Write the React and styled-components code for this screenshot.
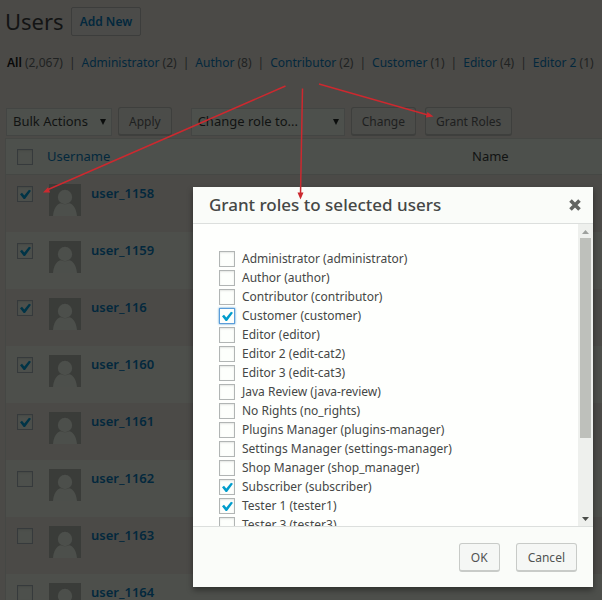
import React, { useState } from "react";
import styled, { createGlobalStyle, css } from "styled-components";

const Global = createGlobalStyle`
  *, *::before, *::after { box-sizing: border-box; }
  body {
    margin: 0;
    background: #4b4a47;
    color: #202222;
    font: 13px/19px "Noto Sans", "Open Sans", sans-serif;
  }
  button, input, select { font: inherit; color: inherit; margin: 0; }
`;

const Page = styled.div`
  position: relative;
  height: 100vh;
  overflow: hidden;
  white-space: nowrap;
`;

const Heading = styled.header`
  display: flex;
  align-items: center;
  gap: 7px;
  padding: 7px 5px 0;
`;

const Title = styled.h1`
  margin: 0;
  color: #131414;
  font-size: 22px;
  font-weight: 400;
  line-height: 29px;
`;

const AddButton = styled.button`
  height: 29px;
  padding: 0 8px;
  border: 1px solid #3c3d3c;
  border-radius: 2px;
  background: #4b4b49;
  color: #03283d;
  font-size: 12px;
  font-weight: 600;
`;

const Filters = styled.ul`
  display: flex;
  margin: 0;
  padding: 17px 7px 0;
  list-style: none;
  font-size: 12px;
`;

const Filter = styled.li`
  &:not(:last-child)::after {
    content: "|";
    margin: 0 6px;
  }
`;

const FilterLink = styled.a`
  color: ${(p) => (p.$current ? "#080808" : "#03283d")};
  font-weight: ${(p) => (p.$current ? 600 : 400)};
  text-decoration: none;
`;

const Toolbar = styled.div`
  display: flex;
  align-items: center;
  margin-top: 35px;
  padding-left: 6px;
`;

const SelectBox = styled.span`
  display: grid;
  align-items: center;
  width: ${(p) => p.$width}px;
  margin-right: 6px;
  > * { grid-area: 1 / 1; }
  svg { justify-self: end; margin-right: 5px; pointer-events: none; }
`;

const Select = styled.select`
  appearance: none;
  width: 100%;
  height: 28px;
  padding: 0 20px 0 6px;
  border: 1px solid #434543;
  border-radius: 0;
  background: #4d504c;
  color: #111312;
  font-size: 13px;
`;

const ToolButton = styled.button`
  height: 29px;
  margin-right: ${(p) => p.$after || 0}px;
  padding: 0 10px;
  border: 1px solid #3e3f3d;
  border-bottom-width: 2px;
  border-radius: 3px;
  background: #4b4c49;
  color: #1e2020;
  font-size: 12px;
`;

const UserTable = styled.table`
  width: calc(100% - 5px);
  margin: 2px 0 0 5px;
  table-layout: fixed;
  border-collapse: separate;
  border-spacing: 0;
  border: solid #454744;
  border-width: 1px 0 0 1px;
  th, td { padding: 0; text-align: left; font-weight: 400; }
  thead th { height: 36px; background: #4d504c; border-bottom: 1px solid #454744; color: #111312; }
  tbody tr:nth-child(even) { background: #4d4f4b; }
  tbody td { height: 57px; vertical-align: top; }
`;

const Col = styled.col`
  width: ${(p) => p.$width}px;
`;

const CheckCell = styled.td`
  && { padding: 11px 0 0 11px; }
`;

const HeadCheck = styled.th`
  && { padding: 0 0 0 11px; }
`;

const User = styled.div`
  display: flex;
  gap: 10px;
  padding: 9px 0 0 2px;
`;

const Link = styled.a`
  color: #03283d;
  font-weight: ${(p) => (p.$strong ? 600 : 400)};
  text-decoration: none;
`;

const CheckFrame = styled.span`
  display: grid;
  flex: none;
  width: 16px;
  height: 16px;
  > * { grid-area: 1 / 1; }
  svg { display: none; pointer-events: none; color: ${(p) => (p.$dim ? "#003447" : "#009dcc")}; }
  input:checked + svg { display: block; }
`;

const CheckInput = styled.input`
  appearance: none;
  width: 16px;
  height: 16px;
  border: 1px solid #b1b5b4;
  background: #fdfffc;
  box-shadow: inset 0 1px 2px rgba(0, 0, 0, 0.1);
  ${(p) => p.$dim && css`
    border-color: #363a3c;
    background: #4d504c;
  `}
  ${(p) => p.$active && css`
    border-color: #5b9dd9;
    box-shadow: 0 0 2px #3b8fcb;
  `}
`;

const Dialog = styled.section`
  position: absolute;
  inset: 187px 9px 13px 193px;
  display: flex;
  flex-direction: column;
  background: #fefffd;
  color: #454746;
  box-shadow: 0 3px 6px rgba(0, 0, 0, 0.4);
`;

const DialogHeader = styled.header`
  display: flex;
  align-items: center;
  justify-content: space-between;
  height: 37px;
  padding: 0 11px 0 16px;
  border-bottom: 1px solid #dcdfdd;
  background: #fafcf9;
`;

const DialogTitle = styled.h2`
  margin: 0;
  font-size: 17px;
  font-weight: 500;
  line-height: 24px;
`;

const CloseButton = styled.button`
  display: flex;
  padding: 0;
  border: 0;
  background: none;
`;

const DialogBody = styled.div`
  display: flex;
  flex: 1;
  min-height: 0;
`;

const RoleList = styled.div`
  flex: 1;
  padding: 25px 26px;
  overflow: auto;
  scrollbar-width: none;
`;

const Role = styled.label`
  display: flex;
  align-items: center;
  gap: 7px;
  height: 19px;
  font-size: 12px;
`;

const ScrollTrack = styled.div`
  display: flex;
  flex-direction: column;
  align-items: center;
  justify-content: space-between;
  width: 15px;
  background: #eef0ed;
`;

const ScrollStart = styled.div`
  display: flex;
  flex-direction: column;
  height: 71%;
`;

const ScrollThumb = styled.div`
  flex: 1;
  width: 11px;
  background: #bec0bb;
`;

const DialogFooter = styled.footer`
  display: flex;
  justify-content: flex-end;
  gap: 16px;
  height: 61px;
  padding: 16px;
  border-top: 1px solid #dcdfdd;
  background: #fafcf9;
`;

const DialogButton = styled.button`
  height: 29px;
  padding: 0 11px;
  border: 1px solid #c8cbc8;
  border-bottom-width: 2px;
  border-radius: 3px;
  background: #f5f7f5;
  color: #505352;
  font-size: 12px;
`;

const ArrowLayer = styled.svg`
  position: absolute;
  top: 0;
  left: 0;
  pointer-events: none;
`;

const filters = [
  ["All", "2,067"], ["Administrator", 2], ["Author", 8], ["Contributor", 2],
  ["Customer", 1], ["Editor", 4], ["Editor 2", 1],
];

const users = ["user_1158", "user_1159", "user_116", "user_1160", "user_1161", "user_1162", "user_1163", "user_1164"];

const roles = [
  "Administrator (administrator)", "Author (author)", "Contributor (contributor)",
  "Customer (customer)", "Editor (editor)", "Editor 2 (edit-cat2)", "Editor 3 (edit-cat3)",
  "Java Review (java-review)", "No Rights (no_rights)", "Plugins Manager (plugins-manager)",
  "Settings Manager (settings-manager)", "Shop Manager (shop_manager)",
  "Subscriber (subscriber)", "Tester 1 (tester1)", "Tester 3 (tester3)",
];

function Checkbox({ dim, active, initial = false, ...rest }) {
  const [checked, setChecked] = useState(initial);
  return (
    <CheckFrame $dim={dim}>
      <CheckInput type="checkbox" $dim={dim} $active={active} checked={checked}
        onChange={(e) => setChecked(e.target.checked)} {...rest} />
      <svg width="16" height="16" viewBox="0 0 16 16" aria-hidden="true">
        <path d="M3 8.2 5 6.8 7.3 9.6 12 3.8 14 4.8 8 13H6.7Z" fill="currentColor" />
      </svg>
    </CheckFrame>
  );
}

function Avatar() {
  return (
    <svg width="32" height="32" viewBox="0 0 32 32" aria-hidden="true">
      <rect width="32" height="32" fill="#3a3c39" />
      <circle cx="16" cy="13" r="7.2" fill="#4c4f4b" />
      <path d="M4 32C4.600 24.500 8 19.500 12 19.200Q16 21.500 20 19.200C24 19.500 27.400 24.500 28 32Z" fill="#4c4f4b" />
    </svg>
  );
}

function Picker({ label, width }) {
  return (
    <SelectBox $width={width}>
      <Select aria-label={label}><option>{label}</option></Select>
      <svg width="8" height="8" viewBox="0 0 8 8" aria-hidden="true"><path d="M1 1h6L4 7Z" fill="#0b0d0c" /></svg>
    </SelectBox>
  );
}

function ScrollArrow({ down }) {
  return (
    <svg width="11" height="14" viewBox="0 0 11 14" aria-hidden="true">
      <path d={down ? "M2 5h7L5.500 9Z" : "M2 10h7L5.500 6Z"} fill={down ? "#4a4c49" : "#9da09d"} />
    </svg>
  );
}

export default function App() {
  return (
    <>
      <Global />
      <Page>
        <Heading>
          <Title>Users</Title>
          <AddButton type="button">Add New</AddButton>
        </Heading>
        <Filters>
          {filters.map(([name, count], i) => (
            <Filter key={name}>
              <FilterLink href="#" $current={i === 0}>{name}</FilterLink> ({count})
            </Filter>
          ))}
        </Filters>
        <Toolbar>
          <Picker label="Bulk Actions" width={106} />
          <ToolButton type="button" $after={19}>Apply</ToolButton>
          <Picker label="Change role to..." width={154} />
          <ToolButton type="button" $after={9}>Change</ToolButton>
          <ToolButton type="button">Grant Roles</ToolButton>
        </Toolbar>
        <UserTable>
          <colgroup><Col $width={41} /><Col $width={425} /><col /></colgroup>
          <thead>
            <tr>
              <HeadCheck><Checkbox dim aria-label="Select all users" /></HeadCheck>
              <th><Link href="#">Username</Link></th>
              <th>Name</th>
            </tr>
          </thead>
          <tbody>
            {users.map((name, i) => (
              <tr key={name}>
                <CheckCell><Checkbox dim initial={i < 5} aria-label={`Select ${name}`} /></CheckCell>
                <td><User><Avatar /><Link href="#" $strong>{name}</Link></User></td>
                <td />
              </tr>
            ))}
          </tbody>
        </UserTable>
        <Dialog role="dialog" aria-labelledby="grant-title">
          <DialogHeader>
            <DialogTitle id="grant-title">Grant roles to selected users</DialogTitle>
            <CloseButton type="button" aria-label="Close">
              <svg width="14" height="14" viewBox="0 0 14 14"><path d="m2.500 2.500 9 9m0-9-9 9" fill="none" stroke="#626461" strokeWidth="3.600" /></svg>
            </CloseButton>
          </DialogHeader>
          <DialogBody>
            <RoleList>
              {roles.map((role) => (
                <Role key={role}>
                  <Checkbox active={role.startsWith("Customer")} initial={/^(Customer|Subscriber|Tester 1)/.test(role)} />
                  {role}
                </Role>
              ))}
            </RoleList>
            <ScrollTrack aria-hidden="true">
              <ScrollStart><ScrollArrow /><ScrollThumb /></ScrollStart>
              <ScrollArrow down />
            </ScrollTrack>
          </DialogBody>
          <DialogFooter>
            <DialogButton type="button">OK</DialogButton>
            <DialogButton type="button">Cancel</DialogButton>
          </DialogFooter>
        </Dialog>
        <ArrowLayer width="602" height="600" viewBox="0 0 602 600" aria-hidden="true">
          <g fill="none" stroke="#cc292f" strokeWidth="1.500">
            <path d="M285.500 86 47 190M302.500 88.500 300.500 195M319 84 428 115" />
          </g>
          <path d="M43 192.500 48 187.200 50.200 192.500ZM300.500 199.500 297.500 192.500H303.500ZM433.500 116.500 427.400 112 425.800 117.600Z" fill="#cc292f" />
        </ArrowLayer>
      </Page>
    </>
  );
}
